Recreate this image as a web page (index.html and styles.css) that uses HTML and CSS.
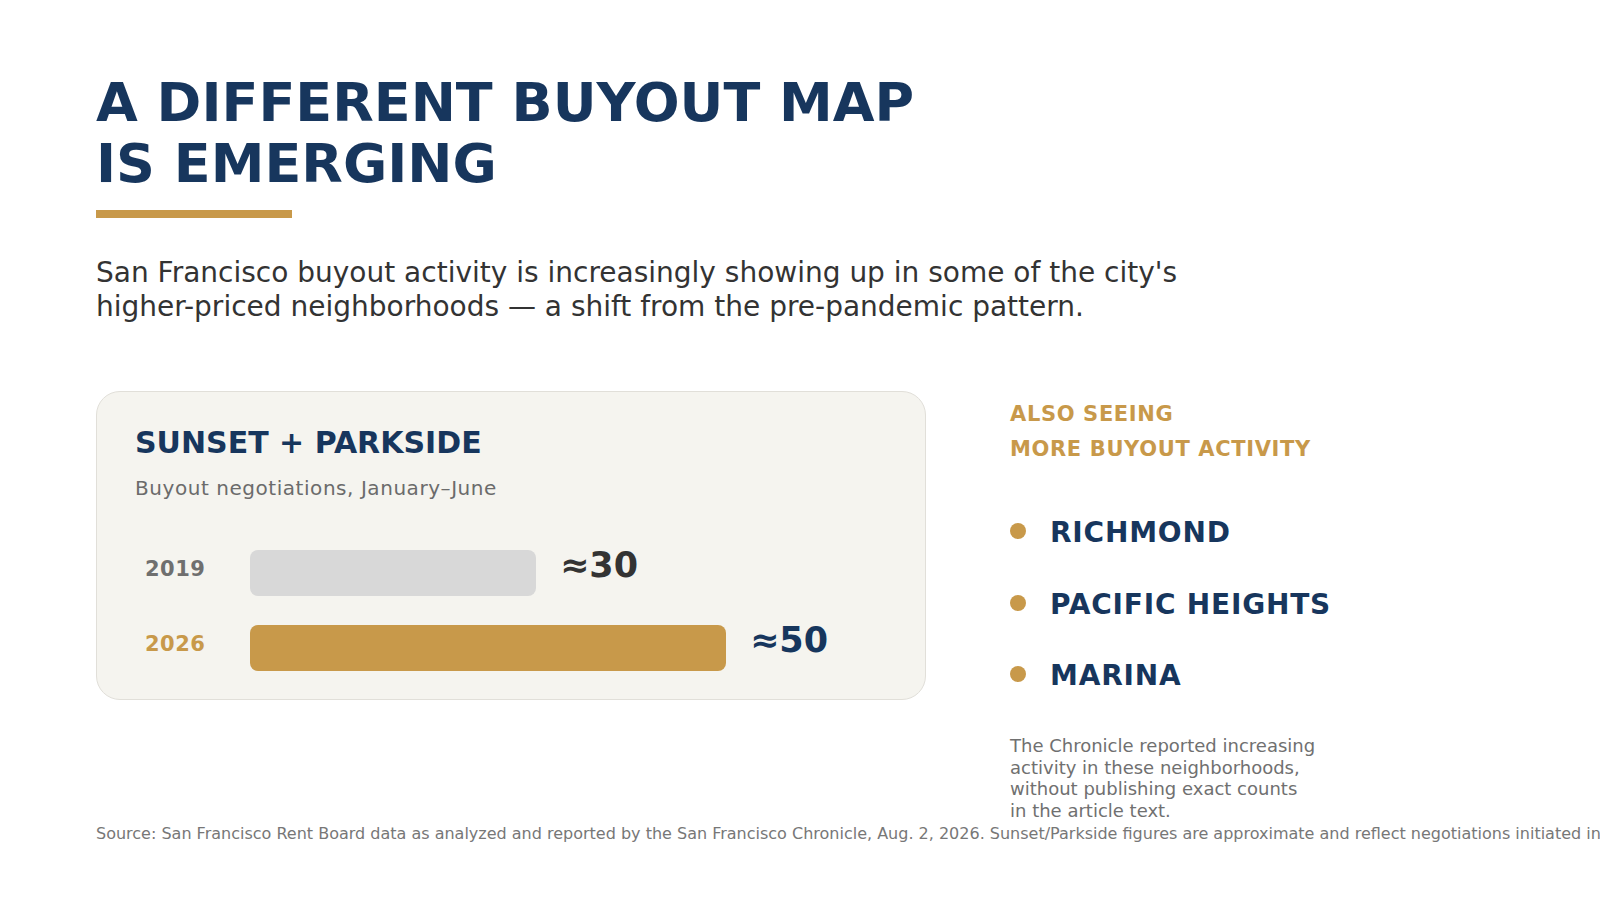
FILE: index.html
```html
<!DOCTYPE html>
<html lang="en">
<head>
<meta charset="utf-8">
<title>A Different Buyout Map Is Emerging</title>
<link rel="stylesheet" href="styles.css">
</head>
<body>
<main class="slide">
  <h1 class="title">A DIFFERENT BUYOUT MAP<br>IS EMERGING</h1>
  <div class="rule"></div>
  <p class="lede">San Francisco buyout activity is increasingly showing up in some of the city's<br>higher-priced neighborhoods — a shift from the pre-pandemic pattern.</p>

  <section class="content">
    <div class="card">
      <h2 class="card-title">SUNSET + PARKSIDE</h2>
      <p class="card-sub">Buyout negotiations, January–June</p>
      <div class="rows">
        <div class="row">
          <span class="year year-old">2019</span>
          <span class="bar bar-old" style="width:286px"></span>
          <span class="value value-old">≈30</span>
        </div>
        <div class="row">
          <span class="year year-new">2026</span>
          <span class="bar bar-new" style="width:476px"></span>
          <span class="value value-new">≈50</span>
        </div>
      </div>
    </div>

    <aside class="side">
      <h3 class="side-head">ALSO SEEING<br>MORE BUYOUT ACTIVITY</h3>
      <ul class="hoods">
        <li class="hood"><span class="dot"></span><span class="hood-name">RICHMOND</span></li>
        <li class="hood"><span class="dot"></span><span class="hood-name">PACIFIC HEIGHTS</span></li>
        <li class="hood"><span class="dot"></span><span class="hood-name">MARINA</span></li>
      </ul>
      <p class="note">The Chronicle reported increasing<br>activity in these neighborhoods,<br>without publishing exact counts<br>in the article text.</p>
    </aside>
  </section>

  <p class="source">Source: San Francisco Rent Board data as analyzed and reported by the San Francisco Chronicle, Aug. 2, 2026. Sunset/Parkside figures are approximate and reflect negotiations initiated in the first half of each year.</p>
</main>
</body>
</html>
```

FILE: styles.css
```css
* { box-sizing: border-box; }

html, body {
  margin: 0;
  padding: 0;
  background: #ffffff;
}

body {
  font-family: "DejaVu Sans", Verdana, sans-serif;
  color: #333333;
}

.slide {
  width: 1600px;
  height: 900px;
  padding: 72px 0 0 96px;
  overflow: hidden;
}

.title {
  margin: 0;
  font-size: 54px;
  line-height: 61px;
  font-weight: 700;
  color: #17365d;
}

.rule {
  width: 196px;
  height: 8px;
  margin-top: 16px;
  background: #c8994a;
}

.lede {
  margin: 38px 0 0;
  font-size: 28px;
  line-height: 34px;
  color: #333333;
}

.content {
  display: grid;
  grid-template-columns: 830px 1fr;
  column-gap: 84px;
  align-items: start;
  margin-top: 67px;
}

.card {
  background: #f5f4ef;
  border: 1px solid #e1dfd9;
  border-radius: 24px;
  padding: 33px 38px 28px;
}

.card-title {
  margin: 0;
  font-size: 30px;
  line-height: 36px;
  font-weight: 700;
  color: #17365d;
}

.card-sub {
  margin: 13px 0 0;
  font-size: 20px;
  line-height: 28px;
  letter-spacing: 0.55px;
  color: #6b6b6b;
}

.rows {
  display: flex;
  flex-direction: column;
  row-gap: 29px;
  margin-top: 48px;
}

.row {
  display: flex;
  align-items: center;
  height: 46px;
  padding-left: 10px;
}

.year {
  flex: none;
  width: 81px;
  margin-right: 24px;
  margin-bottom: 7px;
  font-size: 21px;
  line-height: 1;
  font-weight: 700;
  letter-spacing: 0.5px;
}

.year-old { color: #6f6f6f; }
.year-new { color: #c8994a; }

.bar {
  flex: none;
  display: block;
  height: 46px;
  border-radius: 8px;
}

.bar-old { background: #d8d8d8; }
.bar-new { background: #c8994a; }

.value {
  margin-left: 24px;
  margin-bottom: 15px;
  font-size: 35px;
  line-height: 1;
  font-weight: 700;
}

.value-old { color: #333333; }
.value-new { color: #17365d; }

.side {
  padding-top: 6px;
}

.side-head {
  margin: 0;
  font-size: 21px;
  line-height: 35px;
  font-weight: 700;
  letter-spacing: 0.64px;
  color: #c8994a;
}

.hoods {
  list-style: none;
  margin: 49px 0 0;
  padding: 0;
  display: flex;
  flex-direction: column;
  row-gap: 37.6px;
}

.hood {
  display: flex;
  align-items: center;
  column-gap: 24px;
  height: 34px;
}

.dot {
  flex: none;
  width: 16px;
  height: 16px;
  margin-bottom: 4px;
  border-radius: 50%;
  background: #c8994a;
}

.hood-name {
  font-size: 28px;
  line-height: 34px;
  font-weight: 700;
  letter-spacing: 0.8px;
  color: #17365d;
}

.note {
  margin: 42px 0 0;
  font-size: 18px;
  line-height: 21.5px;
  color: #707070;
}

.source {
  margin: 3px 0 0;
  font-size: 16px;
  line-height: 20px;
  color: #777777;
  white-space: nowrap;
}
```
